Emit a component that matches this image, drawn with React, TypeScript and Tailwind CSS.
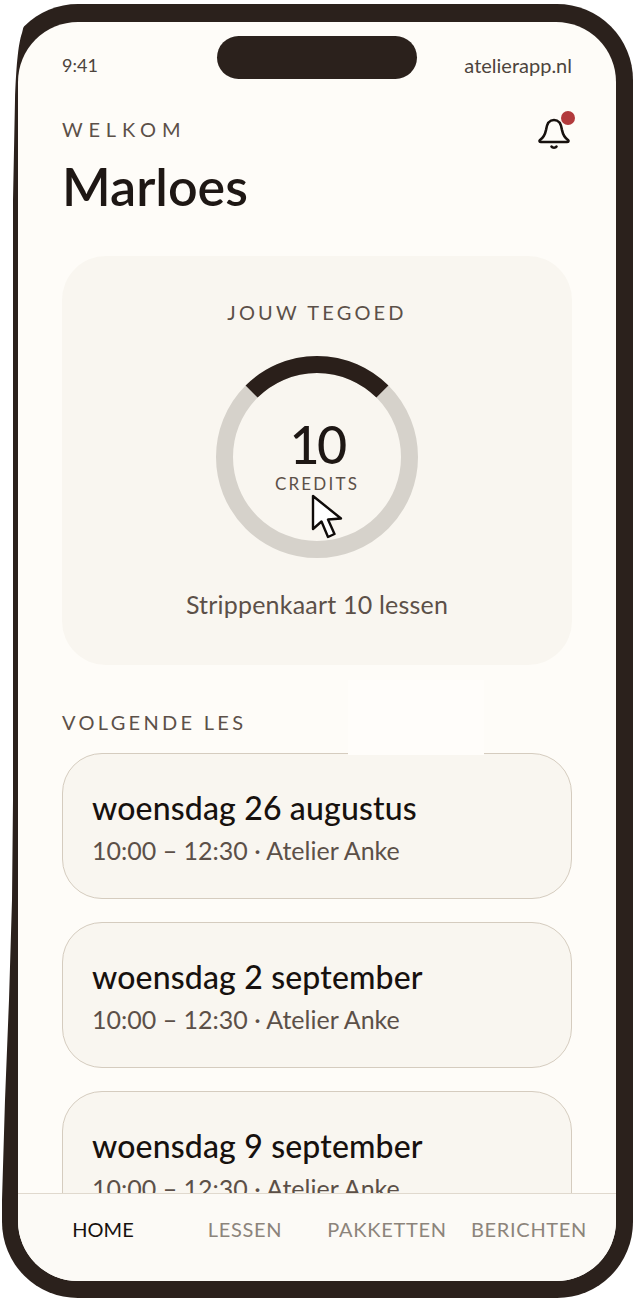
const lessons = [
  { date: "woensdag 26 augustus", time: "10:00 – 12:30 · Atelier Anke" },
  { date: "woensdag 2 september", time: "10:00 – 12:30 · Atelier Anke" },
  { date: "woensdag 9 september", time: "10:00 – 12:30 · Atelier Anke" },
];

const tabs = ["HOME", "LESSEN", "PAKKETTEN", "BERICHTEN"];

const Bell = () => (
  <svg width="40" height="44" viewBox="0 0 40 44" fill="none" className="block">
    <path
      d="M4 30c3-2 5-5 6-10 1-7 3-10 8-10s7 3 8 10c1 5 3 8 6 10 1 1 .5 2-1 2H5c-1.500 0-2-1-1-2z"
      stroke="#17110e"
      strokeWidth="2.600"
      strokeLinejoin="round"
    />
    <path d="M15.500 36.500c1 1.600 4 1.600 5 0" stroke="#17110e" strokeWidth="2.600" strokeLinecap="round" />
    <circle cx="32" cy="8" r="7" fill="#b23a3c" />
  </svg>
);

const Ring = () => (
  <svg width="202" height="202" viewBox="0 0 202 202" fill="none" className="block">
    <circle cx="101" cy="101" r="92.500" stroke="#d6d2cb" strokeWidth="17" />
    <path d="M35.600 35.600a92.500 92.500 0 0 1 130.800 0" stroke="#2a1f1a" strokeWidth="17" />
  </svg>
);

const Cursor = () => (
  <svg width="34" height="46" viewBox="0 0 34 46" fill="none" className="block">
    <path
      d="M3 2v33l8.500-7.500L18 43l6.500-3-6.500-14.500L31 24.500z"
      fill="#ffffff"
      stroke="#0f0b09"
      strokeWidth="2.400"
      strokeLinejoin="round"
    />
  </svg>
);

export default function App() {
  return (
    <div
      className="relative w-[634px] h-[1302px] overflow-hidden bg-white pt-[4px] pl-[2px]"
      style={{ fontFamily: "Lato, sans-serif" }}
    >
      <div className="w-[631px] h-[1294px] rounded-[76px] bg-[#2b211c] pt-[18px] pb-[17px] pl-[16px] pr-[17px]">
        <div className="relative flex h-full w-full flex-col overflow-hidden rounded-[60px] bg-[#fefcf8]">
          <div className="min-h-0 flex-1 overflow-hidden px-[44px] pt-[14px]">
            <div className="grid h-[43px] grid-cols-[1fr_200px_1fr] items-start">
              <span className="pt-[15px] text-[18px] leading-[28px] text-[#4d443d]">9:41</span>
              <div className="h-[43px] rounded-[22px] bg-[#2b211c]" />
              <span className="pt-[15px] text-right text-[20px] leading-[28px] text-[#4d443d]">atelierapp.nl</span>
            </div>

            <div className="mt-[38px] flex items-start justify-between">
              <div>
                <p className="text-[20px] leading-[24px] tracking-[0.29em] text-[#5c5048]">WELKOM</p>
                <h1 className="mt-[15px] text-[52px] leading-[60px] font-semibold text-[#1e1714]">Marloes</h1>
              </div>
              <div className="mr-[-4px] mt-[-7px]">
                <Bell />
              </div>
            </div>

            <section className="mt-[40px] flex h-[409px] flex-col items-center rounded-[44px] bg-[#f9f6f0] pt-[43px]">
              <h2 className="text-[20px] leading-[26px] tracking-[0.158em] text-[#5c5048]">JOUW TEGOED</h2>
              <div className="relative mt-[31px]">
                <Ring />
                <div className="absolute inset-0 flex flex-col items-center pt-[62px]">
                  <span className="text-[52px] leading-[52px] font-medium tracking-[-0.05em] text-[#1e1714]">10</span>
                  <span className="mt-[4px] text-[17px] leading-[20px] tracking-[0.13em] text-[#5c5048]">CREDITS</span>
                </div>
                <div className="absolute left-[94px] top-[138px]">
                  <Cursor />
                </div>
              </div>
              <p className="mt-[31px] text-[25px] leading-[30px] tracking-[0.008em] text-[#5c5048]">Strippenkaart 10 lessen</p>
            </section>

            <h2 className="mt-[44px] text-[20px] leading-[26px] tracking-[0.165em] text-[#5c5048]">VOLGENDE LES</h2>

            <div className="mt-[18px] flex flex-col gap-[23px]">
              {lessons.map((lesson) => (
                <div
                  key={lesson.date}
                  className="h-[146px] shrink-0 rounded-[40px] border-[1.5px] border-[#d5ccbf] bg-[#f9f6f0] px-[29px] pt-[34px]"
                >
                  <h3 className="text-[32px] leading-[40px] font-medium tracking-[0.005em] text-[#17110e]">{lesson.date}</h3>
                  <p className="mt-[3px] text-[25px] leading-[38px] text-[#5c5048]">{lesson.time}</p>
                </div>
              ))}
            </div>
          </div>

          {/* wit vlak over de bovenrand van de eerste kaart */}
          <div className="absolute left-[330px] top-[658px] h-[75px] w-[136px] bg-[#fffdfa]" />

          <nav className="grid h-[88px] shrink-0 grid-cols-4 border-t-[1.5px] border-[#e0d9ce] bg-[#fcfaf6] pb-[17px] pl-[14px] pr-[16px]">
            {tabs.map((tab, i) => (
              <span
                key={tab}
                className={
                  i === 0
                    ? "self-center text-center text-[20px] text-[#17110e]"
                    : "self-center text-center text-[20px] tracking-[0.035em] text-[#8c847b]"
                }
              >
                {tab}
              </span>
            ))}
          </nav>
        </div>
      </div>

      {/* scheve linkerrand van het toestel */}
      <svg width="24" height="1302" viewBox="0 0 24 1302" className="absolute left-0 top-0">
        <path d="M0 0H30L22 33C18 44 16 70 15 100L13 200V800L12 900L9 1000L5 1100L2 1200H0Z" fill="#ffffff" />
      </svg>
    </div>
  );
}
